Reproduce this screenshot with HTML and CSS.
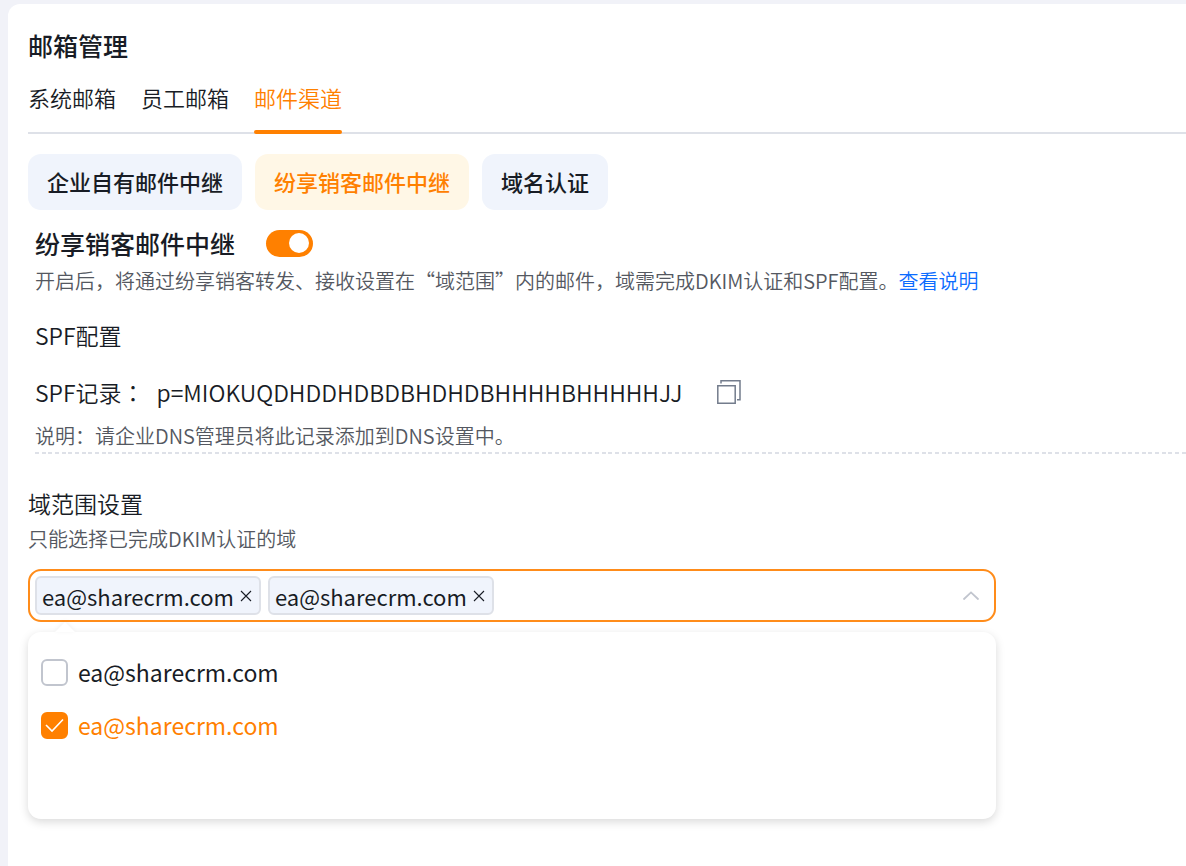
FILE: index.html
```html
<!DOCTYPE html>
<html lang="zh-CN">
<head>
<meta charset="utf-8">
<meta name="viewport" content="width=device-width, initial-scale=1">
<title>邮箱管理</title>
<link rel="stylesheet" href="styles.css">
</head>
<body>
<main class="card">
  <h1 class="page-title">邮箱管理</h1>
  <nav class="tabs">
    <a class="tab" href="#system">系统邮箱</a>
    <a class="tab" href="#staff">员工邮箱</a>
    <a class="tab tab-active" href="#channel" aria-current="page">邮件渠道</a>
  </nav>
  <div class="pills">
    <button type="button" class="pill">企业自有邮件中继</button>
    <button type="button" class="pill pill-active">纷享销客邮件中继</button>
    <button type="button" class="pill">域名认证</button>
  </div>

  <section class="relay">
    <div class="relay-head">
      <label class="relay-title" for="relay-switch">纷享销客邮件中继</label>
      <input class="switch" id="relay-switch" type="checkbox" role="switch" checked>
    </div>
    <p class="hint relay-hint">开启后，将通过纷享销客转发、接收设置在“域范围”内的邮件，域需完成DKIM认证和SPF配置。<a class="link" href="#help">查看说明</a></p>
    <h2 class="subtitle spf-title">SPF配置</h2>
    <div class="record">
      <span class="record-label">SPF记录<span class="colon" lang="zh-TW">：</span></span>
      <span class="record-value">p=MIOKUQDHDDHDBDBHDHDBHHHHBHHHHHJJ</span>
      <button type="button" class="copy" aria-label="复制">
        <svg class="copy-icon" viewBox="0 0 24 24" fill="none" stroke="currentColor" stroke-width="1.5"><path d="M4 3.600V.8h19v19h-3"/><path d="M.8 5.800h17.400v17.400H.8z"/></svg>
      </button>
    </div>
    <p class="hint note">说明：请企业DNS管理员将此记录添加到DNS设置中。</p>
  </section>

  <section class="domain">
    <h2 class="subtitle">域范围设置</h2>
    <p class="hint domain-hint">只能选择已完成DKIM认证的域</p>
    <div class="select">
      <span class="tag">ea@sharecrm.com<button type="button" class="tag-close" aria-label="移除"><svg class="close-icon" viewBox="0 0 12 12" stroke="currentColor" stroke-width="1.100"><path d="M1 1l10 10M11 1L1 11"/></svg></button></span>
      <span class="tag">ea@sharecrm.com<button type="button" class="tag-close" aria-label="移除"><svg class="close-icon" viewBox="0 0 12 12" stroke="currentColor" stroke-width="1.100"><path d="M1 1l10 10M11 1L1 11"/></svg></button></span>
      <input class="select-input" type="text" aria-label="域范围设置">
      <button type="button" class="select-toggle" aria-label="收起"><svg class="chevron" viewBox="0 0 16 9" fill="none" stroke="currentColor" stroke-width="1.800" stroke-linecap="round"><path d="M1 8l7-6.600L15 8"/></svg></button>
    </div>
    <div class="dropdown">
      <label class="option"><input class="check" type="checkbox"><span>ea@sharecrm.com</span></label>
      <label class="option option-on"><input class="check" type="checkbox" checked><span>ea@sharecrm.com</span></label>
    </div>
  </section>
</main>
</body>
</html>
```
FILE: styles.css
```css
* { box-sizing: border-box; }

body {
  margin: 0;
  padding: 4px 0 0 8px;
  min-height: 100vh;
  display: flex;
  background: #f1f2f8;
  color: #181c25;
  font-family: "Noto Sans CJK SC", sans-serif;
}

button, input { font: inherit; color: inherit; margin: 0; }
button { border: 0; padding: 0; background: none; cursor: pointer; }
h1, h2, p { margin: 0; }
svg { display: block; }

.card {
  flex: 1;
  min-width: 0;
  padding: 23px 0 40px 20px;
  background: #fff;
  border-top-left-radius: 12px;
}

.page-title { font-size: 25px; line-height: 36px; font-weight: 500; }

.tabs {
  display: flex;
  gap: 25px;
  margin-top: 18px;
  border-bottom: 2px solid #dee1e8;
}
.tab {
  position: relative;
  padding-bottom: 19px;
  font-size: 22px;
  font-weight: 350;
  line-height: 32px;
  color: inherit;
  text-decoration: none;
}
.tab-active { color: #ff8000; }
.tab-active::after {
  content: "";
  position: absolute;
  left: 0;
  right: 0;
  bottom: -2px;
  height: 4px;
  border-radius: 2px;
  background: #ff8000;
}

.pills { display: flex; flex-wrap: wrap; gap: 13px; margin-top: 20px; }
.pill {
  padding: 11px 19px 13px;
  border-radius: 13px;
  background: #f0f4fc;
  font-size: 22px;
  line-height: 32px;
  font-weight: 500;
}
.pill-active { background: #fff7e6; color: #ff8000; }

.relay { margin-top: 15px; padding-left: 7px; }
.relay-head { display: flex; align-items: center; gap: 31px; }
.relay-title { font-size: 25px; line-height: 36px; font-weight: 500; }

.switch {
  appearance: none;
  display: flex;
  align-items: center;
  width: 47px;
  height: 27px;
  padding: 0 4px;
  border-radius: 14px;
  background: #c1c5ce;
}
.switch::before {
  content: "";
  width: 20px;
  height: 20px;
  border-radius: 50%;
  background: #fff;
}
.switch:checked { justify-content: flex-end; background: #ff8000; }

.hint { font-size: 20px; line-height: 30px; font-weight: 350; color: #545861; }
.relay-hint { margin-top: 5px; }
.link { color: #0c6cff; text-decoration: none; }

.subtitle { font-size: 23px; line-height: 34px; font-weight: 350; }
.spf-title { margin-top: 22px; }

.record {
  display: flex;
  align-items: center;
  margin-top: 23px;
  font-size: 23px;
  font-weight: 350;
  line-height: 34px;
}
.colon { font-family: "Noto Sans CJK TC", sans-serif; }
.record-value { margin-left: 12px; }
.copy { margin-left: 35px; color: #737c8c; }
.copy-icon { width: 24px; height: 24px; }

/* dashed rule: three dashes to every 20px */
.note {
  margin-top: 12px;
  padding-bottom: 3px;
  background: linear-gradient(90deg, #dee1e8 4px, transparent 4px 7px, #dee1e8 7px 11px, transparent 11px 13px, #dee1e8 13px 17px, transparent 17px) left bottom / 20px 2px repeat-x;
}

.domain { margin-top: 32px; padding-right: 20px; }
.domain-hint { margin-top: 4px; }

.select {
  display: flex;
  align-items: center;
  gap: 7px;
  max-width: 968px;
  margin-top: 15px;
  padding: 5px;
  border: 2px solid #ff8c1a;
  border-radius: 13px;
}
.tag {
  display: flex;
  align-items: center;
  gap: 6px;
  height: 39px;
  padding: 0 7px 0 5px;
  border: 2px solid #dee1e8;
  border-radius: 6px;
  background: #f0f4fc;
  font-size: 22px;
}
.close-icon { width: 12px; height: 12px; }
.select-input {
  flex: 1;
  min-width: 0;
  border: 0;
  outline: 0;
  background: none;
  font-size: 22px;
  line-height: 34px;
  padding: 0;
}
.select-toggle { padding: 0 10px; color: #c1c5ce; }
.chevron { width: 16px; height: 9px; }

.dropdown {
  position: relative;
  display: flex;
  flex-direction: column;
  gap: 16px;
  max-width: 968px;
  min-height: 187px;
  margin-top: 10px;
  padding: 22px 13px;
  border-radius: 13px;
  background: #fff;
  box-shadow: 0 3px 10px rgba(0, 0, 0, 0.15);
}
.dropdown::before {
  content: "";
  position: absolute;
  left: 27px;
  top: -10px;
  border: 10px solid transparent;
  border-top: 0;
  border-bottom-color: #fff;
  filter: drop-shadow(0 -1px 2px rgba(0, 0, 0, 0.06));
}
.option {
  display: flex;
  align-items: center;
  gap: 10px;
  font-size: 23px;
  line-height: 37px;
}
.option-on { color: #ff8000; }
.check {
  appearance: none;
  width: 27px;
  height: 27px;
  border: 2px solid #c1c5ce;
  border-radius: 6px;
  background: #fff;
}
.check:checked {
  border-color: #ff8000;
  background: #ff8000 url("data:image/svg+xml,%3Csvg xmlns='http://www.w3.org/2000/svg' viewBox='0 0 23 23' fill='none' stroke='white' stroke-width='1.600'%3E%3Cpath d='M3 11l6 6L20 5.500'/%3E%3C/svg%3E") center / 23px 23px no-repeat;
}
```
